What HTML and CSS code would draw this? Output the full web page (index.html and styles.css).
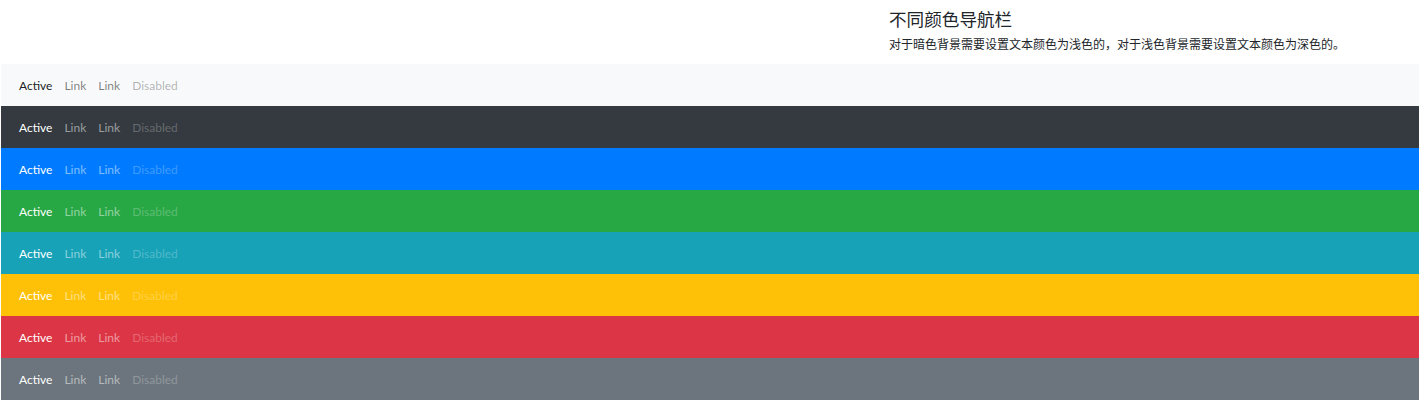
FILE: index.html
```html
<!DOCTYPE html>
<html lang="zh">
<head>
<meta charset="utf-8">
<title>不同颜色导航栏</title>
<link rel="stylesheet" href="styles.css">
</head>
<body>
<header class="intro">
  <h1 class="intro-title">不同颜色导航栏</h1>
  <p class="intro-text">对于暗色背景需要设置文本颜色为浅色的，对于浅色背景需要设置文本颜色为深色的。</p>
</header>
<div class="bars">
  <nav class="navbar navbar-light bg-light"><ul class="nav"><li class="nav-link active">Active</li><li class="nav-link">Link</li><li class="nav-link">Link</li><li class="nav-link disabled">Disabled</li></ul></nav>
  <nav class="navbar navbar-dark bg-dark"><ul class="nav"><li class="nav-link active">Active</li><li class="nav-link">Link</li><li class="nav-link">Link</li><li class="nav-link disabled">Disabled</li></ul></nav>
  <nav class="navbar navbar-dark bg-primary"><ul class="nav"><li class="nav-link active">Active</li><li class="nav-link">Link</li><li class="nav-link">Link</li><li class="nav-link disabled">Disabled</li></ul></nav>
  <nav class="navbar navbar-dark bg-success"><ul class="nav"><li class="nav-link active">Active</li><li class="nav-link">Link</li><li class="nav-link">Link</li><li class="nav-link disabled">Disabled</li></ul></nav>
  <nav class="navbar navbar-dark bg-info"><ul class="nav"><li class="nav-link active">Active</li><li class="nav-link">Link</li><li class="nav-link">Link</li><li class="nav-link disabled">Disabled</li></ul></nav>
  <nav class="navbar navbar-dark bg-warning"><ul class="nav"><li class="nav-link active">Active</li><li class="nav-link">Link</li><li class="nav-link">Link</li><li class="nav-link disabled">Disabled</li></ul></nav>
  <nav class="navbar navbar-dark bg-danger"><ul class="nav"><li class="nav-link active">Active</li><li class="nav-link">Link</li><li class="nav-link">Link</li><li class="nav-link disabled">Disabled</li></ul></nav>
  <nav class="navbar navbar-dark bg-secondary"><ul class="nav"><li class="nav-link active">Active</li><li class="nav-link">Link</li><li class="nav-link">Link</li><li class="nav-link disabled">Disabled</li></ul></nav>
</div>
</body>
</html>
```
FILE: styles.css
```css
html { font-size: 12px; }
body {
  margin: 0;
  background: #fff;
  color: #212529;
  font-family: Lato, "Noto Sans CJK SC", sans-serif;
  font-size: 12px;
  line-height: 1.5;
}
.intro {
  padding: 5px 0 0 889px;
  margin-bottom: 11px;
}
.intro-title {
  margin: 0 0 3px;
  font-size: 17.6px;
  font-weight: 400;
  line-height: 27px;
  font-family: "Noto Sans CJK SC", sans-serif;
}
.intro-text {
  margin: 0;
  font-size: 12px;
  line-height: 18px;
  font-family: "Noto Sans CJK SC", sans-serif;
}
.bars { padding-left: 1px; }
.navbar {
  display: flex;
  align-items: center;
  padding: 6px 12px;
}
.nav {
  display: flex;
  list-style: none;
  margin: 0;
  padding: 0;
}
.nav-link {
  padding: 7px 6px 5px;
  line-height: 18px;
}
.navbar-light .nav-link { color: rgba(0,0,0,.5); }
.navbar-light .nav-link.active { color: rgba(0,0,0,.9); }
.navbar-light .nav-link.disabled { color: rgba(0,0,0,.3); }
.navbar-dark .nav-link { color: rgba(255,255,255,.5); }
.navbar-dark .nav-link.active { color: #fff; }
.navbar-dark .nav-link.disabled { color: rgba(255,255,255,.25); }
.bg-light { background: #f8f9fa; }
.bg-dark { background: #343a40; }
.bg-primary { background: #007bff; }
.bg-success { background: #28a745; }
.bg-info { background: #17a2b8; }
.bg-warning { background: #ffc107; }
.bg-danger { background: #dc3545; }
.bg-secondary { background: #6c757d; }
```
